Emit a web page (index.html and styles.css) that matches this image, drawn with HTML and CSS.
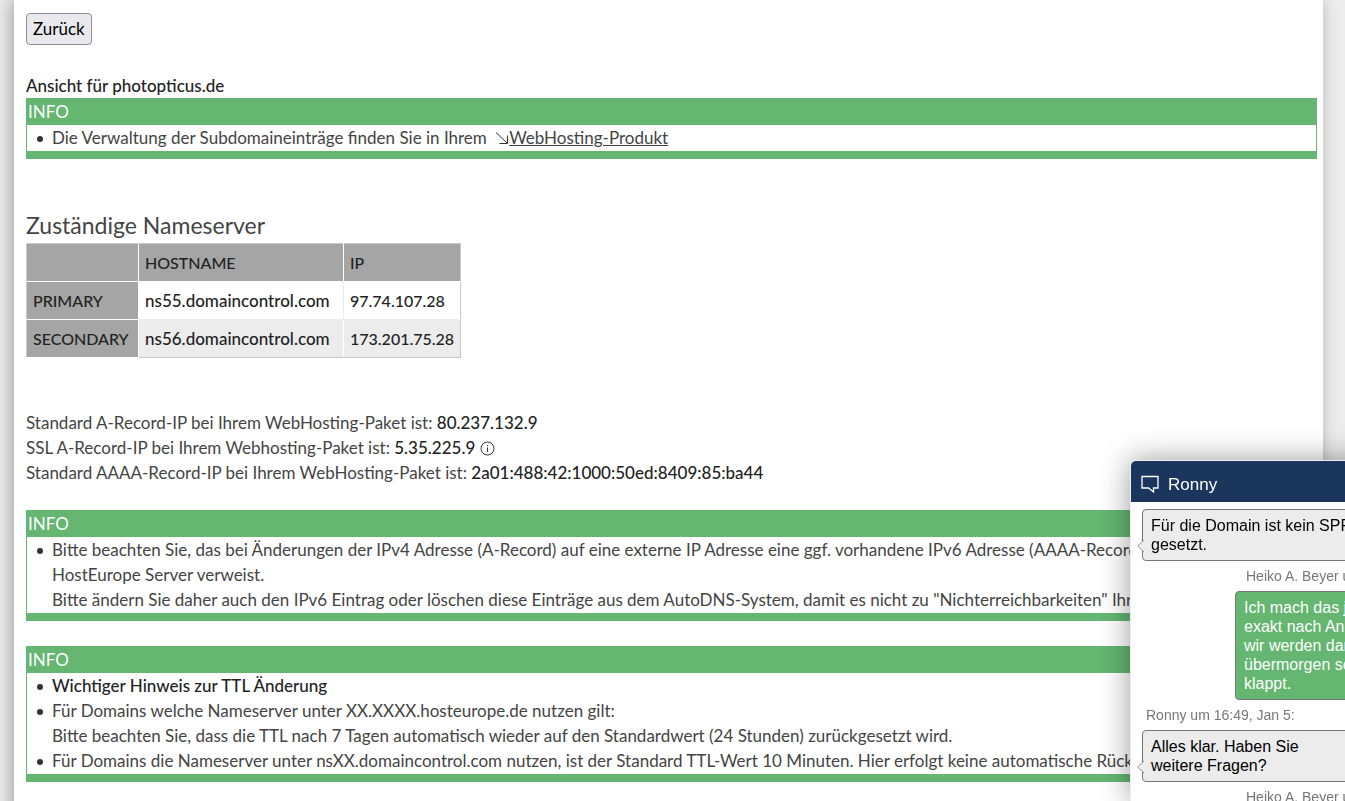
FILE: index.html
```html
<!DOCTYPE html>
<html lang="de">
<head>
  <meta charset="UTF-8">
  <meta name="viewport" content="width=device-width, initial-scale=1.0">
  <title>Nameserver - photopticus.de</title>
  <link rel="stylesheet" href="styles.css">
</head>
<body>

  <main class="page">
    <button type="button" class="back">Zurück</button>

    <p class="view"><b>Ansicht für photopticus.de</b></p>
    <section class="info">
      <div class="info-title">INFO</div>
      <ul>
        <li>Die Verwaltung der Subdomaineinträge finden Sie in Ihrem
          <a href="#"><svg class="arrow" viewBox="0 0 14 14"><path d="M1 1.500L12 12M12.500 4.500V12.500H4.500"/></svg><span>WebHosting-Produkt</span></a></li>
      </ul>
    </section>

    <h2>Zuständige Nameserver</h2>
    <table>
      <tr>
        <th class="role"></th>
        <th class="host">HOSTNAME</th>
        <th>IP</th>
      </tr>
      <tr>
        <th class="role">PRIMARY</th>
        <td class="host">ns55.domaincontrol.com</td>
        <td>97.74.107.28</td>
      </tr>
      <tr class="even">
        <th class="role">SECONDARY</th>
        <td class="host">ns56.domaincontrol.com</td>
        <td>173.201.75.28</td>
      </tr>
    </table>

    <div class="records">
      <p>Standard A-Record-IP bei Ihrem WebHosting-Paket ist: <b>80.237.132.9</b></p>
      <p>SSL A-Record-IP bei Ihrem Webhosting-Paket ist: <b>5.35.225.9</b>
        <svg class="hint" viewBox="0 0 15 15"><circle cx="7.5" cy="7.5" r="6.5"/><path d="M7.5 6.5V11M7.5 4V5.3"/></svg></p>
      <p>Standard AAAA-Record-IP bei Ihrem WebHosting-Paket ist: <b>2a01:488:42:1000:50ed:8409:85:ba44</b></p>
    </div>

    <section class="info">
      <div class="info-title">INFO</div>
      <ul>
        <li>Bitte beachten Sie, das bei Änderungen der IPv4 Adresse (A-Record) auf eine externe IP Adresse eine ggf. vorhandene IPv6 Adresse (AAAA-Record)<br>
          HostEurope Server verweist.<br>
          Bitte ändern Sie daher auch den IPv6 Eintrag oder löschen diese Einträge aus dem AutoDNS-System, damit es nicht zu "Nichterreichbarkeiten" Ihrer</li>
      </ul>
    </section>

    <section class="info">
      <div class="info-title">INFO</div>
      <ul>
        <li><b>Wichtiger Hinweis zur TTL Änderung</b></li>
        <li>Für Domains welche Nameserver unter XX.XXXX.hosteurope.de nutzen gilt:<br>
          Bitte beachten Sie, dass die TTL nach 7 Tagen automatisch wieder auf den Standardwert (24 Stunden) zurückgesetzt wird.</li>
        <li>Für Domains die Nameserver unter nsXX.domaincontrol.com nutzen, ist der Standard TTL-Wert 10 Minuten. Hier erfolgt keine automatische Rück</li>
      </ul>
    </section>
  </main>

  <aside class="chat">
    <header>
      <svg class="bubble-icon" viewBox="0 0 20 20"><path d="M2 2.5H18V14H13.500V18L8.500 14H2Z"/></svg>
      <span>Ronny</span>
    </header>
    <div class="messages">
      <div class="msg">
        <svg class="tail" viewBox="0 0 8 14"><path d="M8 1L1.500 7L8 13"/></svg>
        Für die Domain ist kein SPF<br>gesetzt.
      </div>
      <div class="meta right">Heiko A. Beyer um</div>
      <div class="msg user">Ich mach das jetzt<br>exakt nach An-<br>wir werden dann<br>übermorgen sehen<br>klappt.</div>
      <div class="meta">Ronny um 16:49, Jan 5:</div>
      <div class="msg">
        <svg class="tail" viewBox="0 0 8 14"><path d="M8 1L1.500 7L8 13"/></svg>
        Alles klar. Haben Sie<br>weitere Fragen?
      </div>
      <div class="meta right">Heiko A. Beyer um</div>
    </div>
  </aside>

</body>
</html>
```
FILE: styles.css
```css
html {
  height: 100%;
  overflow: hidden;
}
body {
  margin: 0;
  height: 100%;
  overflow: hidden;
  background-color: #ececec;
  color: #444;
  font-family: Lato, "Open Sans", sans-serif;
  font-size: 17px;
  font-weight: 400;
  line-height: 25px;
}
b {
  color: #222;
  font-weight: 500;
}
p {
  margin: 0;
}
.page {
  box-sizing: border-box;
  min-height: 100%;
  margin: 0 22px 0 14px;
  padding: 13px 6px 19px 12px;
  background-color: white;
  box-shadow: -3px 0 16px rgba(0, 0, 0, 0.3);
}
.back {
  display: block;
  height: 32px;
  padding: 0 6px 2px;
  border: 1px solid #8f8f9d;
  border-radius: 4px;
  background-color: #e9e9ed;
  color: black;
  font: inherit;
}
.view {
  margin-top: 28px;
}
.info {
  margin-bottom: 25px;
  border: 1px solid #64b671;
  border-width: 0 1px 8px;
}
.info-title {
  padding: 1px;
  background-color: #64b671;
  color: white;
}
.info ul {
  margin: 0;
  padding: 0 0 1px 25px;
  list-style: none;
}
.info li {
  position: relative;
  white-space: nowrap;
}
.info li::before {
  content: "";
  position: absolute;
  left: -15px;
  top: 11px;
  width: 6px;
  height: 6px;
  border-radius: 50%;
  background-color: #333;
}
.info a {
  margin-left: 4px;
  color: #444;
  text-decoration: none;
}
.info a span {
  text-decoration: underline;
}
svg {
  fill: none;
  stroke: #333;
}
.arrow {
  width: 14px;
  height: 14px;
  vertical-align: -1px;
}
h2 {
  margin: 54px 0 5px;
  font-size: 23px;
  font-weight: 400;
  line-height: 25px;
}
table {
  border-collapse: collapse;
}
th, td {
  height: 25px;
  padding: 6px;
  border: 1px solid #ececec;
  color: #222;
  font-size: 16px;
  font-weight: 500;
  text-align: left;
}
th {
  border-color: white;
  background-color: #a5a5a5;
}
.even td {
  border-color: white;
  border-bottom-color: #c8c8c8;
  background-color: #ececec;
}
tr:first-child th {
  border-top-color: #c8c8c8;
}
tr th:last-child, tr td:last-child {
  border-right-color: #c8c8c8;
}
tr th:first-child {
  border-left-color: #c8c8c8;
}
.role {
  min-width: 99px;
}
.host {
  min-width: 192px;
}
td.host {
  font-size: 17px;
}
.records {
  margin: 52px 0 25px;
}
.hint {
  width: 15px;
  height: 15px;
  vertical-align: -2px;
}
.chat {
  position: fixed;
  top: 460px;
  bottom: 0;
  right: -67px;
  width: 280px;
  border: 1px solid #eee;
  border-bottom: 0;
  border-radius: 6px 0 0 0;
  background-color: white;
  box-shadow: 0 0 30px rgba(0, 0, 0, 0.4);
  overflow: hidden;
  color: black;
  font-family: "Liberation Sans", Arial, sans-serif;
  font-size: 16px;
  line-height: 19px;
}
.chat header {
  display: flex;
  align-items: center;
  gap: 8px;
  height: 41px;
  padding: 4px 9px 0;
  box-sizing: border-box;
  background-color: #1a365d;
  color: white;
}
.bubble-icon {
  width: 20px;
  height: 20px;
  stroke: white;
  stroke-width: 1.3;
}
.chat header span {
  padding-top: 2px;
  font-size: 17px;
}
.messages {
  padding: 7px 11px;
}
.msg {
  position: relative;
  padding: 6px 8px;
  border: 1px solid #777;
  border-radius: 4px;
  background-color: #ececec;
  white-space: nowrap;
}
.user {
  margin-left: 93px;
  background-color: #64b671;
  color: white;
}
.tail {
  position: absolute;
  left: -7px;
  top: 29px;
  width: 8px;
  height: 14px;
  fill: #ececec;
  stroke: #999;
}
.meta {
  padding: 6px 4px 5px;
  color: #777;
  font-size: 14px;
  white-space: nowrap;
}
.right {
  padding-left: 104px;
}
```
